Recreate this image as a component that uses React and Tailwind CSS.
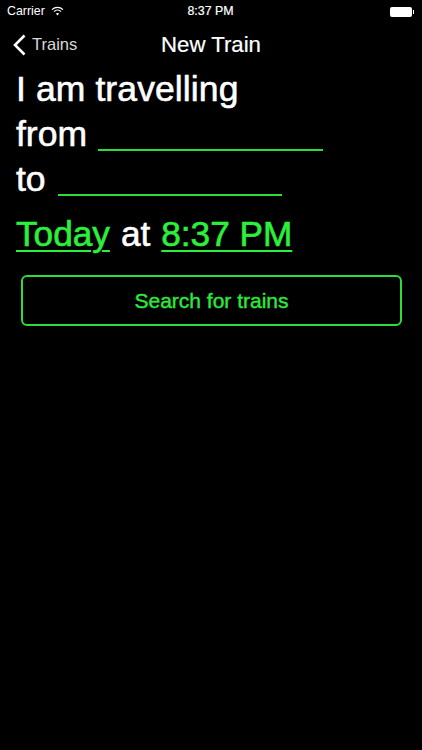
import React from "react";

const sans = "font-['Liberation_Sans',Arial,sans-serif]";

const StatusBar = () => (
  <div className="flex h-[23px] items-center px-[7px] text-[12.4px] text-white">
    <div className="flex flex-1 items-center gap-[6px]">
      <span>Carrier</span>
      <svg width="13" height="10" viewBox="0 0 13 10" fill="none" stroke="white">
        <path d="M1 3.6C4.2.6 8.8.6 12 3.6" strokeWidth="1.3" />
        <path d="M3 5.6c2-1.9 5-1.9 7 0" strokeWidth="1.3" />
        <path d="M6.5 9.6 4.8 7.6c1-.8 2.4-.8 3.4 0z" fill="white" stroke="none" />
      </svg>
    </div>
    <span className="[-webkit-text-stroke:0.2px_white]">8:37 PM</span>
    <div className="flex flex-1 items-center justify-end pr-[1px]">
      <div className="h-[10px] w-[22px] rounded-[2px] bg-white" />
      <div className="ml-[1px] h-[4px] w-[1px] bg-white" />
    </div>
  </div>
);

const NavBar = () => (
  <div className="relative flex h-[43px] items-center justify-center">
    <div className="absolute left-[13px] top-0 flex h-full items-center gap-[6px]">
      <svg width="13" height="22" viewBox="0 0 13 22" fill="none" stroke="white" strokeWidth="2.6">
        <path d="M11.5 1.5 2 11l9.5 9.5" />
      </svg>
      <span className="text-[16.5px] text-[#d8d8d8]">Trains</span>
    </div>
    <h1 className="text-[22.2px] text-white [-webkit-text-stroke:0.2px_white]">New Train</h1>
  </div>
);

const Blank = ({ width }) => (
  <span className={`${width} mb-[6px] inline-block h-[2px] self-end bg-[#2bdc3a]`} />
);

const Link = ({ children }) => (
  <span className="text-[#2bf03c] underline decoration-2 underline-offset-[4px] [-webkit-text-stroke:0.6px_#2bf03c]">
    {children}
  </span>
);

export default function App() {
  return (
    <div className={`${sans} h-[750px] w-[422px] overflow-hidden bg-black`}>
      <StatusBar />
      <NavBar />
      <div className="pl-[16px] pt-[1px] text-[35.5px] leading-[45px] text-white [-webkit-text-stroke:0.6px_white]">
        <div className="tracking-[0.1px]">I am travelling</div>
        <div className="flex gap-[11px]">
          <span>from</span>
          <Blank width="w-[225px]" />
        </div>
        <div className="flex gap-[12px]">
          <span>to</span>
          <Blank width="w-[224px]" />
        </div>
        <div className="mt-[9px] flex gap-[11px] text-[35.2px]">
          <Link>Today</Link>
          <span>at</span>
          <Link>8:37 PM</Link>
        </div>
      </div>
      <div className="px-[21px] pt-[19px]">
        <button className="flex h-[51px] w-[381px] items-center justify-center rounded-[6px] border-2 border-[#2bdc3a] text-[21px] text-[#2bea3a] [-webkit-text-stroke:0.4px_#2bea3a]">
          Search for trains
        </button>
      </div>
    </div>
  );
}
